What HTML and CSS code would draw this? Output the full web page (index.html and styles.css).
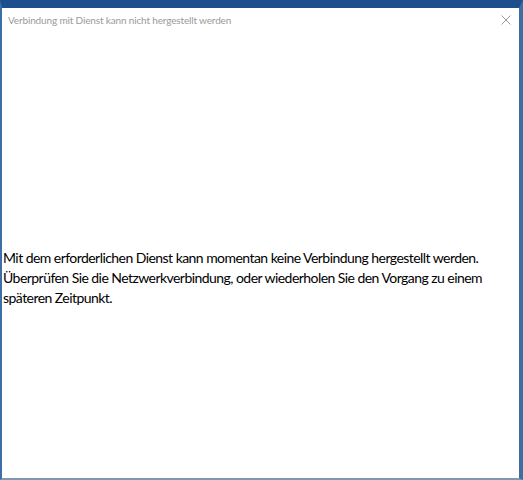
FILE: index.html
```html
<!DOCTYPE html>
<html lang="de">
<head>
<meta charset="utf-8">
<title>Verbindung mit Dienst kann nicht hergestellt werden</title>
<link rel="stylesheet" href="styles.css">
</head>
<body>
<div class="window">
  <div class="titlebar">
    <span class="title">Verbindung mit Dienst kann nicht hergestellt werden</span>
    <span class="close" aria-label="Schließen">
      <svg width="10" height="10" viewBox="0 0 10 10"><path d="M0.5 0.5L9.5 9.5M9.5 0.5L0.5 9.5" stroke="#9a9a9a" stroke-width="1"/></svg>
    </span>
  </div>
  <div class="content">
    <p class="message">Mit dem erforderlichen Dienst kann momentan keine Verbindung hergestellt werden.<br>Überprüfen Sie die Netzwerkverbindung, oder wiederholen Sie den Vorgang zu einem späteren Zeitpunkt.</p>
  </div>
</div>
</body>
</html>
```
FILE: styles.css
```css
html, body {
  margin: 0;
  padding: 0;
  height: 100%;
}
body {
  font-family: Lato, "Open Sans", sans-serif;
  background: #ffffff;
}
.window {
  box-sizing: border-box;
  width: 523px;
  height: 480px;
  border-top: 8px solid #1c4f8c;
  border-left: 2px solid #3d6fa6;
  border-right: 4px solid #3e6e9f;
  border-bottom: 2px solid #7f97b0;
  display: flex;
  flex-direction: column;
  background: #fff;
}
.titlebar {
  display: flex;
  align-items: center;
  justify-content: space-between;
  height: 23px;
  padding: 0 8px 0 6px;
}
.title {
  font-size: 10px;
  letter-spacing: -0.15px;
  color: #9a9a9a;
}
.close {
  display: flex;
  width: 10px;
  height: 10px;
}
.content {
  flex: 1;
  display: flex;
  align-items: center;
  padding: 46px 1px 0;
}
.message {
  margin: 0;
  font-size: 14px;
  letter-spacing: -0.55px;
  line-height: 20px;
  color: #000;
  max-width: 495px;
}
```
